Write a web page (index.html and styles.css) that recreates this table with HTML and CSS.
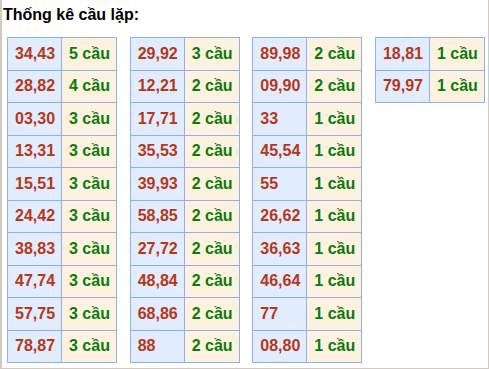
FILE: index.html
```html
<!DOCTYPE html>
<html lang="vi">
<head>
<meta charset="utf-8">
<title>Thống kê cầu lặp</title>
<link rel="stylesheet" href="styles.css">
</head>
<body>
<div class="frame">
  <div class="title">Thống kê cầu lặp:</div>
  <div class="tables">
    <table class="stat">
      <tr><td class="num">34,43</td><td class="cnt">5 cầu</td></tr>
      <tr><td class="num">28,82</td><td class="cnt">4 cầu</td></tr>
      <tr><td class="num">03,30</td><td class="cnt">3 cầu</td></tr>
      <tr><td class="num">13,31</td><td class="cnt">3 cầu</td></tr>
      <tr><td class="num">15,51</td><td class="cnt">3 cầu</td></tr>
      <tr><td class="num">24,42</td><td class="cnt">3 cầu</td></tr>
      <tr><td class="num">38,83</td><td class="cnt">3 cầu</td></tr>
      <tr><td class="num">47,74</td><td class="cnt">3 cầu</td></tr>
      <tr><td class="num">57,75</td><td class="cnt">3 cầu</td></tr>
      <tr><td class="num">78,87</td><td class="cnt">3 cầu</td></tr>
    </table>
    <table class="stat">
      <tr><td class="num">29,92</td><td class="cnt">3 cầu</td></tr>
      <tr><td class="num">12,21</td><td class="cnt">2 cầu</td></tr>
      <tr><td class="num">17,71</td><td class="cnt">2 cầu</td></tr>
      <tr><td class="num">35,53</td><td class="cnt">2 cầu</td></tr>
      <tr><td class="num">39,93</td><td class="cnt">2 cầu</td></tr>
      <tr><td class="num">58,85</td><td class="cnt">2 cầu</td></tr>
      <tr><td class="num">27,72</td><td class="cnt">2 cầu</td></tr>
      <tr><td class="num">48,84</td><td class="cnt">2 cầu</td></tr>
      <tr><td class="num">68,86</td><td class="cnt">2 cầu</td></tr>
      <tr><td class="num">88</td><td class="cnt">2 cầu</td></tr>
    </table>
    <table class="stat">
      <tr><td class="num">89,98</td><td class="cnt">2 cầu</td></tr>
      <tr><td class="num">09,90</td><td class="cnt">2 cầu</td></tr>
      <tr><td class="num">33</td><td class="cnt">1 cầu</td></tr>
      <tr><td class="num">45,54</td><td class="cnt">1 cầu</td></tr>
      <tr><td class="num">55</td><td class="cnt">1 cầu</td></tr>
      <tr><td class="num">26,62</td><td class="cnt">1 cầu</td></tr>
      <tr><td class="num">36,63</td><td class="cnt">1 cầu</td></tr>
      <tr><td class="num">46,64</td><td class="cnt">1 cầu</td></tr>
      <tr><td class="num">77</td><td class="cnt">1 cầu</td></tr>
      <tr><td class="num">08,80</td><td class="cnt">1 cầu</td></tr>
    </table>
    <table class="stat">
      <tr><td class="num">18,81</td><td class="cnt">1 cầu</td></tr>
      <tr><td class="num">79,97</td><td class="cnt">1 cầu</td></tr>
    </table>
  </div>
</div>
</body>
</html>
```
FILE: styles.css
```css
html, body {
  margin: 0;
  padding: 0;
  background: #ffffff;
}
.frame {
  box-sizing: border-box;
  width: 489px;
  height: 369px;
  border-left: 2px solid #d3c9bf;
  border-right: 1px solid #d3c9bf;
  border-bottom: 1px solid #d3c9bf;
  font-family: "Liberation Sans", Arial, sans-serif;
  overflow: hidden;
}
.title {
  padding: 5px 0 0 1px;
  font-size: 16px;
  line-height: 19px;
  font-weight: bold;
  color: #000000;
}
.tables {
  display: flex;
  align-items: flex-start;
  gap: 12.67px;
  margin: 13px 0 0 5px;
}
.stat {
  box-sizing: border-box;
  flex: none;
  border-collapse: separate;
  border-spacing: 0;
  width: 110px;
  table-layout: fixed;
  border-left: 1px solid #8db1ef;
  border-top: 1px solid #8db1ef;
}
.stat td {
  box-sizing: border-box;
  height: 32.5px;
  padding: 0 0 0 7px;
  border-right: 1px solid #8db1ef;
  border-bottom: 1px solid #8db1ef;
  font-size: 16px;
  font-weight: bold;
  vertical-align: middle;
  white-space: nowrap;
  overflow: hidden;
}
.num {
  width: 54px;
  background: #e1ecfd;
  color: #b5371a;
}
.cnt {
  width: 55px;
  background: #fdf2e0;
  color: #0b7b0b;
}
```
